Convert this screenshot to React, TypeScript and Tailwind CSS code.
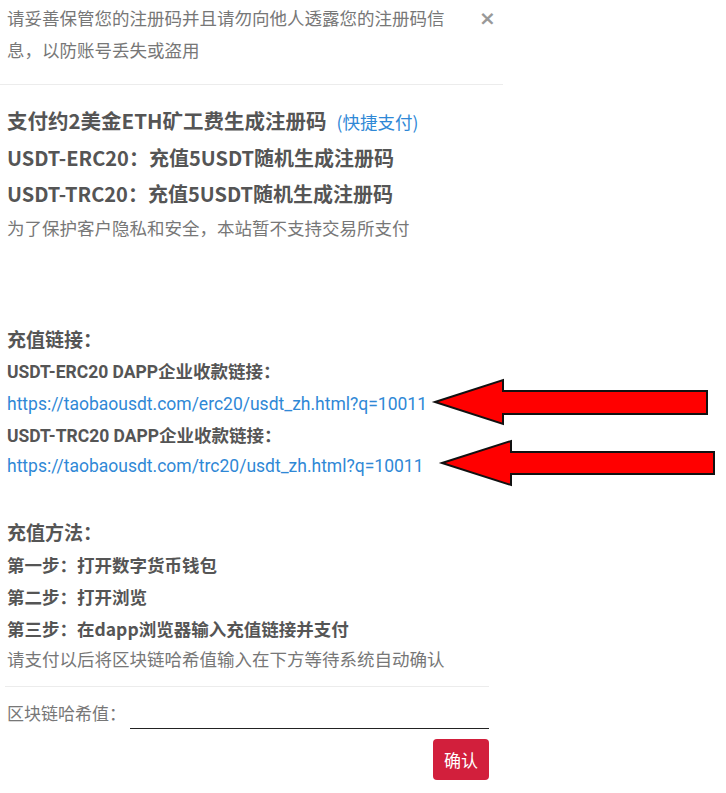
import React from "react";

const cjk = '"Microsoft YaHei", "Noto Sans CJK SC", "Noto Sans", sans-serif';
const rob = 'Roboto, "Noto Sans CJK SC", sans-serif';

export default function App() {
  return (
    <div className="relative w-[726px] h-[793px] bg-white overflow-hidden" style={{ fontFamily: cjk }}>
      <div className="w-[503px]">
        {/* header */}
        <div className="flex items-start pl-[7px] pt-[2px] pb-[18px] border-b border-[#ececec]">
          <div className="w-[446px] text-[17.5px] leading-[32px] text-[#777]">
            请妥善保管您的注册码并且请勿向他人透露您的注册码信息，以防账号丢失或盗用
          </div>
          <div className="ml-[26px] text-[20px] leading-[32px] font-bold text-[#999]" style={{ fontFamily: '"DejaVu Sans", sans-serif' }}>
            ×
          </div>
        </div>

        {/* body */}
        <div className="pl-[7px] pt-[17px]">
          <div className="text-[20.5px] leading-[36px] font-bold text-[#555]">
            支付约2美金ETH矿工费生成注册码
            <span className="ml-[10px] text-[17.5px] font-normal text-[#2f88d6]">(快捷支付)</span>
          </div>
          <div className="text-[20px] leading-[36px] font-bold text-[#555]">USDT-ERC20：充值5USDT随机生成注册码</div>
          <div className="text-[20px] leading-[36px] font-bold text-[#555]">USDT-TRC20：充值5USDT随机生成注册码</div>
          <div className="text-[17.5px] leading-[32px] text-[#777]">为了保护客户隐私和安全，本站暂不支持交易所支付</div>

          <div className="mt-[78px] text-[19px] leading-[34px] font-bold text-[#555]">充值链接：</div>
          <div className="text-[17.5px] leading-[32px] font-bold text-[#555]" style={{ fontFamily: rob }}>USDT-ERC20 DAPP企业收款链接：</div>
          <div className="text-[17.5px] leading-[32px] text-[#2f88d6]" style={{ fontFamily: rob }}>https://taobaousdt.com/erc20/usdt_zh.html?q=10011</div>
          <div className="text-[17.5px] leading-[32px] font-bold text-[#555]" style={{ fontFamily: rob }}>USDT-TRC20 DAPP企业收款链接：</div>
          <div className="text-[17.5px] leading-[29px] text-[#2f88d6]" style={{ fontFamily: rob }}>https://taobaousdt.com/trc20/usdt_zh.html?q=10011</div>

          <div className="mt-[34px] text-[19px] leading-[34px] font-bold text-[#555]">充值方法：</div>
          <div className="text-[17.5px] leading-[32px] font-bold text-[#555]">第一步：打开数字货币钱包</div>
          <div className="text-[17.5px] leading-[32px] font-bold text-[#555]">第二步：打开浏览</div>
          <div className="text-[17.5px] leading-[32px] font-bold text-[#555]">第三步：在dapp浏览器输入充值链接并支付</div>
          <div className="text-[17.5px] leading-[28px] text-[#777]">请支付以后将区块链哈希值输入在下方等待系统自动确认</div>
        </div>

        {/* footer */}
        <div className="ml-[5px] w-[484px] mt-[13px] border-t border-[#ececec]">
          <div className="flex items-start pt-[11px] pl-[2px]">
            <div className="text-[17px] leading-[30px] text-[#777] w-[123px]">区块链哈希值：</div>
            <div className="flex-1 h-[31px] border-b-[1.5px] border-[#222]"></div>
          </div>
          <div className="flex justify-end mt-[10px]">
            <button className="w-[56px] h-[41px] rounded-[4px] bg-[#d21f3c] text-white text-[17px]" style={{ fontFamily: cjk }}>
              确认
            </button>
          </div>
        </div>
      </div>

      {/* annotation arrows */}
      <svg className="absolute left-0 top-0 pointer-events-none" width="726" height="793">
        <polygon
          points="435,402 503,380 503,391 707,391 707,414 503,414 503,424"
          fill="#ff0000"
          stroke="#111"
          strokeWidth="2"
          strokeLinejoin="miter"
        />
        <polygon
          points="442,463 511,441 511,452 714,452 714,474 511,474 511,485"
          fill="#ff0000"
          stroke="#111"
          strokeWidth="2"
          strokeLinejoin="miter"
        />
      </svg>
    </div>
  );
}
